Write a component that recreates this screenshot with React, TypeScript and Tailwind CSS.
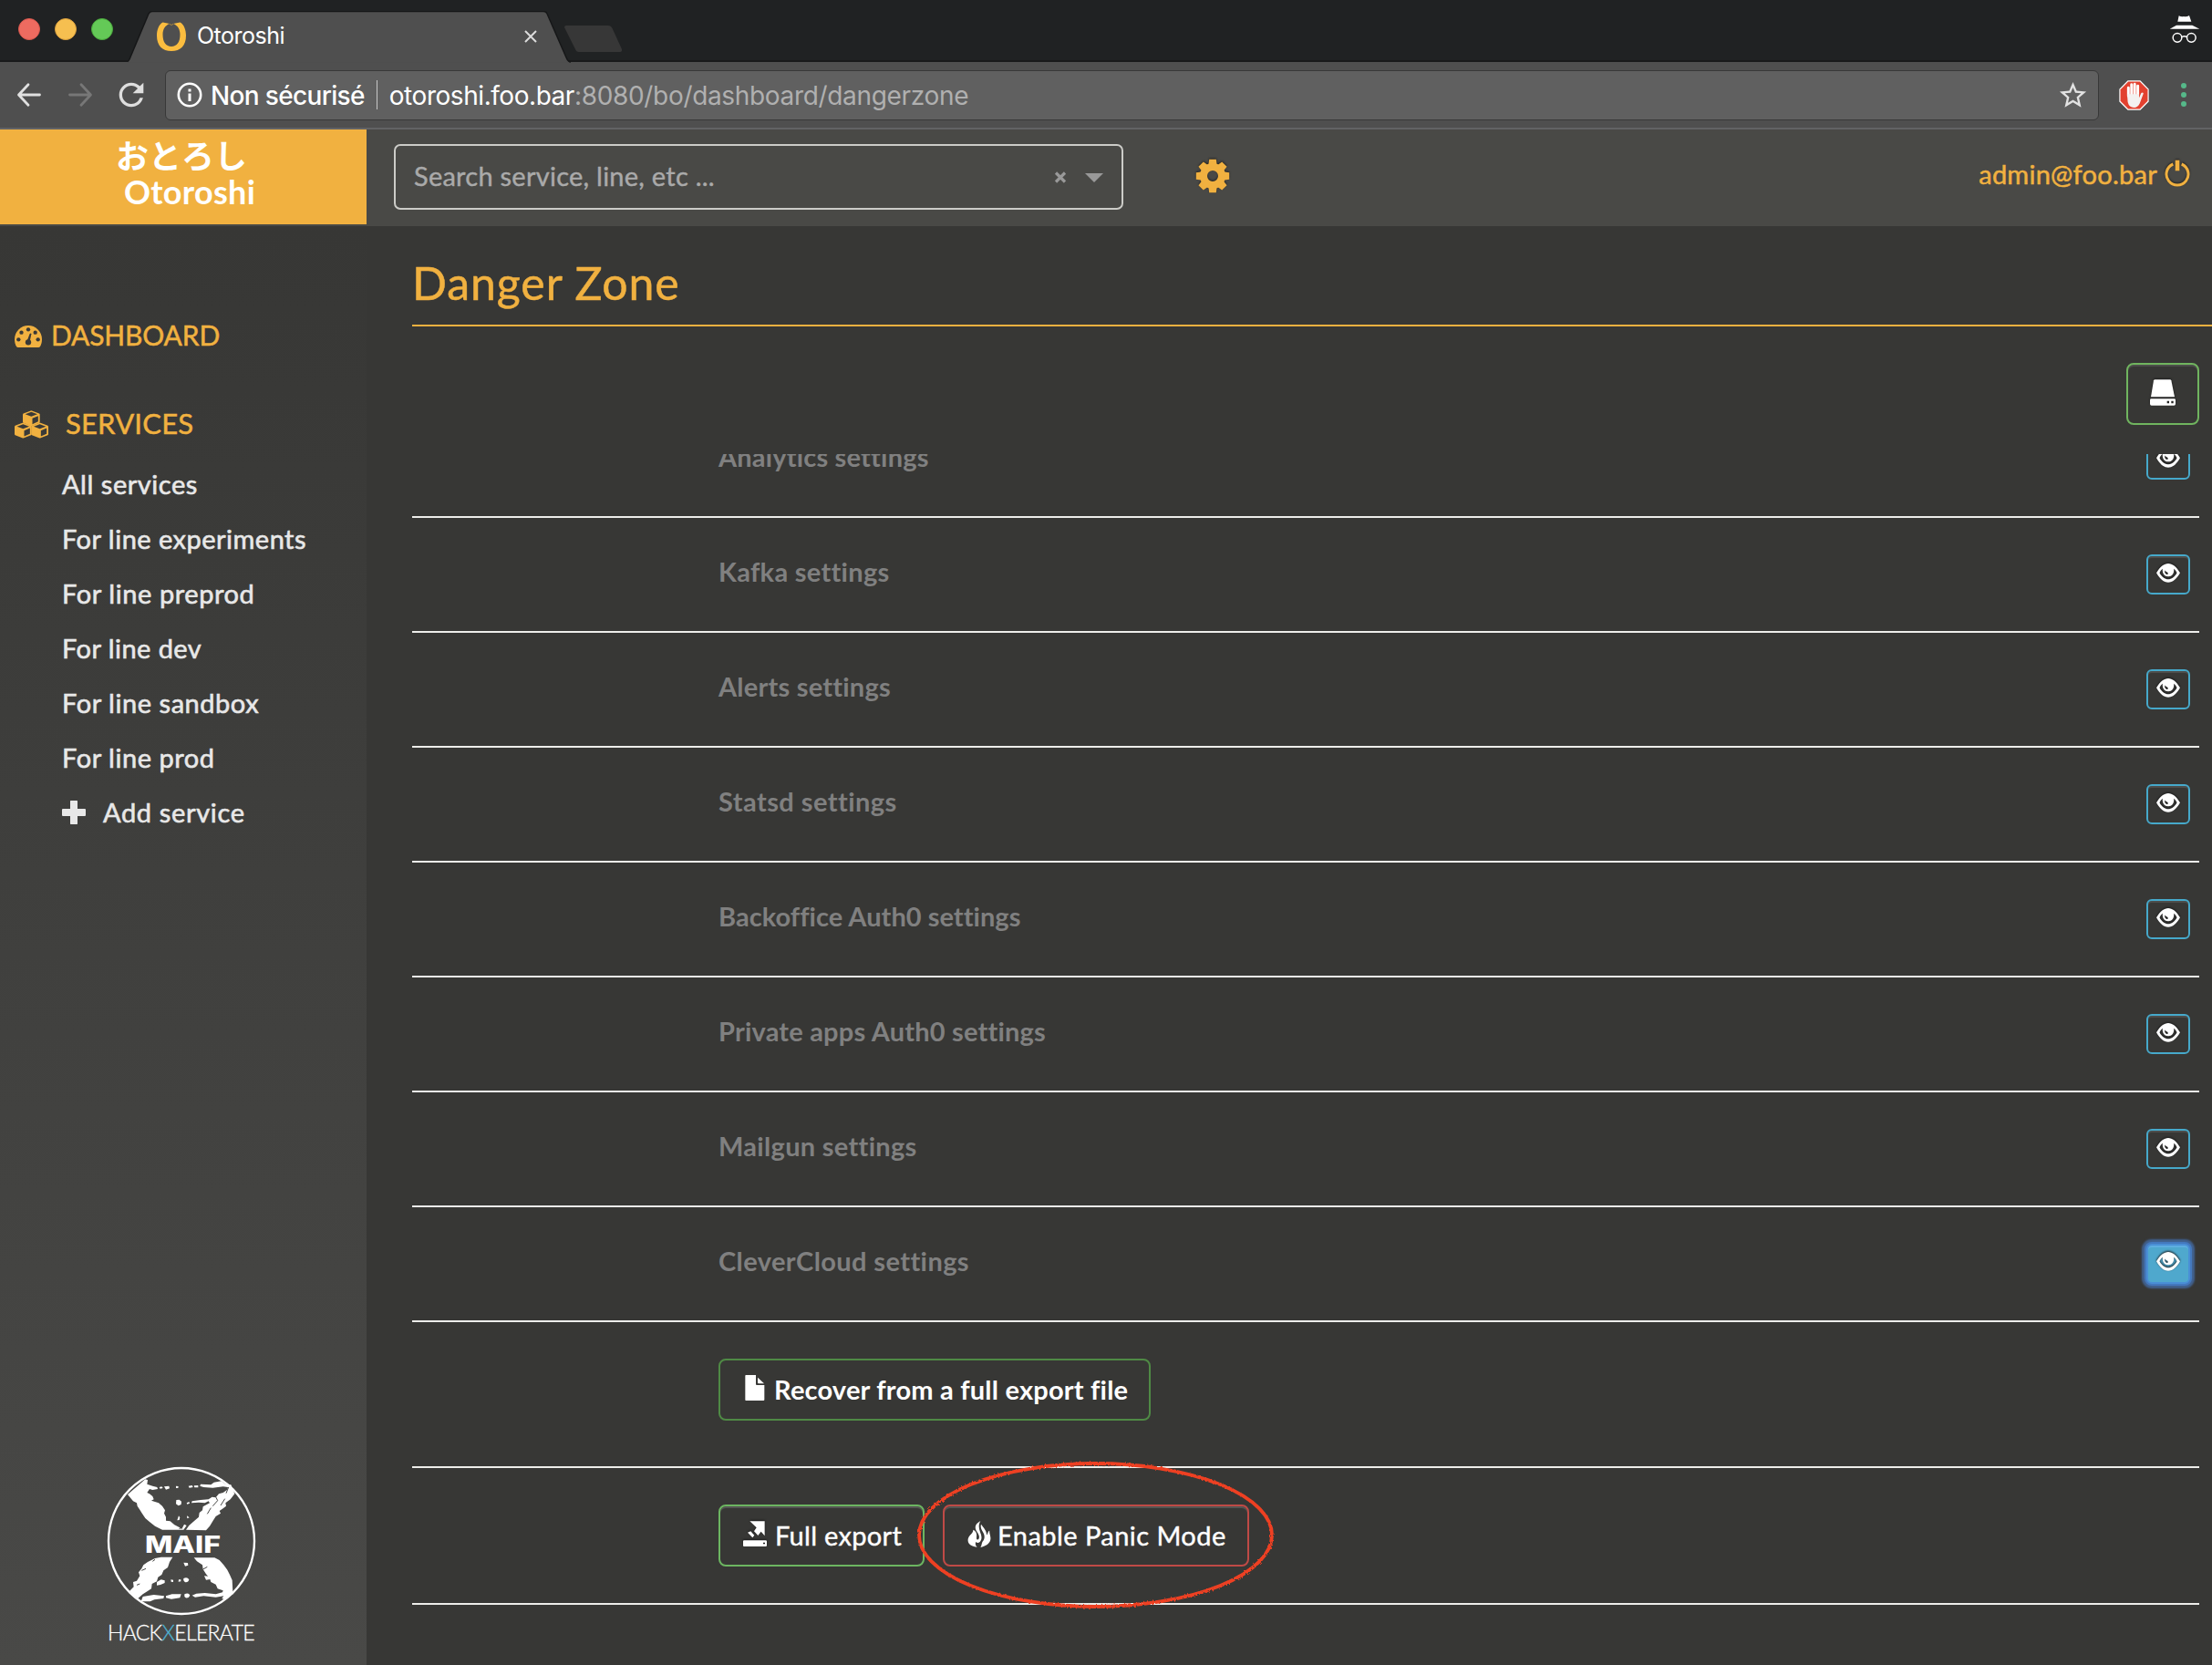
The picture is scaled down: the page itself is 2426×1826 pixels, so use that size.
import type { ReactNode } from "react";
import { MdRefresh, MdStarBorder } from "react-icons/md";

const YELLOW = "#f1b140";

/* ---------- icons ---------- */

const TabShape = () => (
  <svg className="absolute left-0 top-0" width="546" height="57" viewBox="0 0 546 57">
    <path d="M-2 56.5 C0 56 1 55 2 53 L23 3 Q24.500 0.500 27 0.500 H456 Q459 0.500 460 3 L481 51 Q483 56.500 486 56.500 Z" fill="#4f4f4f" />
    <path d="M-2 56 C0 56 1 55 2 53 L23 3 Q24.500 0.500 27 0.500 H456 Q459 0.500 460 3 L481 51 Q483 56 486 56" fill="none" stroke="#161718" strokeWidth="1.500" />
    <path d="M481 16 H527 Q530 16 531.500 19 L542 42 Q542.500 45 540 45 H495 Q492 45 491 42 L479 18 Q479 16 481 16Z" fill="#373737" />
  </svg>
);

const Favicon = () => (
  <svg width="32" height="32" viewBox="0 0 32 32">
    <path d="M6.500 0.500 L14 2 C9 4 6.500 8 6.500 14 C6.500 22 10 27 16 27 S25.500 22 25.500 14 C25.500 8 23 4 18 2 L25.500 0.500 C30 3 32 9 32 15 C32 26 26 32 16 32 S0 26 0 15 C0 9 2 3 6.500 0.500Z" fill="#fbbd3f" />
    <path d="M14 2.300 L16 3.500 L18 2.300" fill="none" stroke="#a9863f" strokeWidth="1" />
  </svg>
);

const Incognito = () => (
  <svg width="34" height="30" viewBox="0 0 98 90" fill="#fff">
    <path d="M26 20 L30 1 Q38 5 46 3 Q56 5 64 0 L71 20Z" />
    <path d="M0 44 L22 32 H74 L98 44Z" />
    <g fill="none" stroke="#fff" strokeWidth="4.500">
      <circle cx="25" cy="73" r="14.500" />
      <circle cx="71" cy="73" r="14.500" />
      <path d="M40 70 Q48 66 56 70" />
    </g>
  </svg>
);

const Back = ({ color, flip }: { color: string; flip?: boolean }) => (
  <svg width="28" height="28" viewBox="0 0 28 28" className={flip ? "-scale-x-100" : ""}>
    <path d="M25.500 14 H3 M13 2.800 L2.500 14 L13 25.200" fill="none" stroke={color} strokeWidth="2.800" strokeLinecap="round" strokeLinejoin="round" />
  </svg>
);

const Info = () => (
  <svg width="28" height="28" viewBox="0 0 28 28">
    <circle cx="14" cy="14" r="12.200" fill="none" stroke="#fff" strokeWidth="2.600" />
    <path d="M12.500 7.500h3v3h-3z M12.500 12.500h3v8.500h-3z" fill="#fff" />
  </svg>
);

const AdBlock = () => (
  <svg width="33" height="33" viewBox="0 0 96 96">
    <path d="M28 1 H68 L95 28 V68 L68 95 H28 L1 68 V28Z" fill="#fff" />
    <path d="M29.500 4.500 H66.500 L91.500 29.500 V66.500 L66.500 91.500 H29.500 L4.500 66.500 V29.500Z" fill="#e2412f" />
    <path d="M30 50 V24 M40 46 V14 M50 46 V12 M60 48 V18" stroke="#fff" strokeWidth="8.500" strokeLinecap="round" fill="none" />
    <path d="M26 44 H64 V56 L71 41 Q76 37 78 42 L66 74 Q60 87 48 87 Q32 87 28 70Z" fill="#f4f1f0" />
  </svg>
);

const Gear = () => (
  <svg width="38" height="38" viewBox="-19 -19 38 38" className="drop-shadow-[0_-1px_1px_#222]">
    <g fill={YELLOW}>
      <path d="M-3.800 -18.200 H3.800 L4.800 -11 H-4.800Z" />
      <path d="M-3.800 -18.200 H3.800 L4.800 -11 H-4.800Z" transform="rotate(45)" />
      <path d="M-3.800 -18.200 H3.800 L4.800 -11 H-4.800Z" transform="rotate(90)" />
      <path d="M-3.800 -18.200 H3.800 L4.800 -11 H-4.800Z" transform="rotate(135)" />
      <path d="M-3.800 -18.200 H3.800 L4.800 -11 H-4.800Z" transform="rotate(180)" />
      <path d="M-3.800 -18.200 H3.800 L4.800 -11 H-4.800Z" transform="rotate(225)" />
      <path d="M-3.800 -18.200 H3.800 L4.800 -11 H-4.800Z" transform="rotate(270)" />
      <path d="M-3.800 -18.200 H3.800 L4.800 -11 H-4.800Z" transform="rotate(315)" />
    </g>
    <circle r="10" fill="none" stroke={YELLOW} strokeWidth="8" />
  </svg>
);

const Power = () => (
  <svg width="28" height="30" viewBox="0 0 84 90" className="drop-shadow-[0_-1px_1px_#222]">
    <path d="M28 15 A36 36 0 1 0 56 15" fill="none" stroke={YELLOW} strokeWidth="9" />
    <path d="M35 2 H49 V37 H35Z" fill={YELLOW} />
  </svg>
);

const Dashboard = () => (
  <svg width="30" height="24" viewBox="0 0 90 72">
    <path d="M45 0 A45 45 0 0 1 90 45 C90 54 88 62 84 69 Q82 72 79 72 H11 Q8 72 6 69 C2 62 0 54 0 45 A45 45 0 0 1 45 0Z" fill={YELLOW} />
    <g fill="#393937">
      <circle cx="13" cy="46" r="6.500" />
      <circle cx="22.500" cy="23" r="6.500" />
      <circle cx="45" cy="13" r="6.500" />
      <circle cx="68" cy="23" r="6.500" />
      <circle cx="77" cy="46" r="6.500" />
      <circle cx="45" cy="55" r="9.500" />
      <path d="M41 50 L50 27 Q54 23 55 28 L50 53Z" />
    </g>
  </svg>
);

const Cube = ({ x, y }: { x: number; y: number }) => (
  <g transform={`translate(${x} ${y})`}>
    <path d="M28 0 L54 10 Q56 11 56 13 V38 Q56 40 54 41 L29 51 H27 L2 41 Q0 40 0 38 V13 Q0 11 2 10Z" fill={YELLOW} />
    <path d="M28 5 L48 12.500 L28 20 L8 12.500Z M31.500 26 L50.500 18 V36.500 L31.500 45Z" fill="#3a3a38" />
  </g>
);

const Cubes = () => (
  <svg width="37" height="31" viewBox="0 0 111 92">
    <Cube x={27} y={0} />
    <Cube x={0} y={40} />
    <Cube x={55} y={40} />
  </svg>
);

const Plus = () => (
  <svg width="26" height="26" viewBox="0 0 26 26">
    <path d="M9.500 0 H16.500 Q17 0 17 1 V9 H25 Q26 9 26 10 V16 Q26 17 25 17 H17 V25 Q17 26 16.500 26 H9.500 Q9 26 9 25 V17 H1 Q0 17 0 16 V10 Q0 9 1 9 H9 V1 Q9 0 9.500 0Z" fill="#e8e8e8" />
  </svg>
);

const Drive = () => (
  <svg width="28" height="29" viewBox="0 0 84 87" fill="#fff" className="drop-shadow-[0_-1px_1px_#1a1a1a]">
    <path d="M16 1 H66 Q69 1 70 4 L81 58 H3 L12 4 Q13 1 16 1Z" />
    <path fillRule="evenodd" d="M4 64 H80 Q84 64 84 68 V81 Q84 86 79 86 H5 Q0 86 0 81 V68 Q0 64 4 64Z M56 71 V79 H63 V71Z M70 71 V79 H77 V71Z" />
  </svg>
);

const Eye = () => (
  <svg width="26" height="21" viewBox="0 0 26 21" className="drop-shadow-[0_-1px_1px_#1a1a1a]">
    <path
      fill="#fff"
      fillRule="evenodd"
      d="M0 10.300 C4 3.500 8.500 0 13 0 S22 3.500 26 10.300 C22 17.200 18 20.700 13 20.700 S4 17.200 0 10.300Z M6.800 5.800 C5.300 7 4.200 8.600 3.500 10.300 C6 15 9.500 17.300 13 17.300 S20 15 22.500 10.300 C21.800 8.600 20.700 7 19.200 5.800 C19.800 11 17 14.300 13 14.300 S6.200 11 6.800 5.800Z M9.500 7.500 C8.600 9.800 10 12 12.200 12 C13.200 11 12.800 9.800 11.200 9.200 C10.300 8.800 9.900 8.200 9.500 7.500Z"
    />
  </svg>
);

const FileIcon = () => (
  <svg width="22" height="28" viewBox="0 0 66 84" fill="#fff">
    <path d="M3 0 H36 V30 Q36 33 39 33 H64 V81 Q64 84 61 84 H3 Q1 84 1 81 V3 Q1 0 3 0Z" />
    <path d="M42 8 L63 28 H45 Q42 28 42 25Z" />
  </svg>
);

const Export = () => (
  <svg width="26" height="29" viewBox="0 0 78 87" fill="#fff" className="drop-shadow-[0_-1px_1px_#1a1a1a]">
    <path d="M22 1 H71 V49 L59 35 L49 48 L36 34 L44 22Z" />
    <path d="M15 38 L25 34 L37 47 L31 55Z" />
    <path fillRule="evenodd" d="M3 64 H74 Q78 64 78 67 V81 Q78 84 74 84 H3 Q0 84 0 81 V67 Q0 64 3 64Z M66 71 V76 H72 V71Z" />
  </svg>
);

const Fire = () => (
  <svg width="26" height="29" viewBox="0 0 76 86" fill="#fff">
    <path d="M42 0 C26 9 22 19 28 31 C33 40 40 47 37 57 C35 62 30 62 29 57 C29 50 31 44 27 36 C25 33 22 31 18 29 C19 37 13 41 8 47 C0 56 -1 66 5 74 C11 81 20 84 31 85 C26 80 24 75 27 68 C32 74 40 71 43 64 C48 54 44 44 41 36 C36 24 35 12 42 0Z" />
    <path d="M44 11 C40 23 48 31 52 40 C57 51 55 60 49 67 C45 73 47 79 42 86 C58 82 70 76 74 63 C77 51 71 44 71 31 C65 35 66 43 62 46 C62 31 53 24 44 11Z" />
  </svg>
);

const Circled = () => (
  <svg className="pointer-events-none absolute -left-[36px] -top-[56px]" width="408" height="178" viewBox="0 0 408 178">
    <defs>
      <filter id="chalk" x="-5%" y="-5%" width="110%" height="110%">
        <feTurbulence type="fractalNoise" baseFrequency="0.5" numOctaves="2" seed="4" />
        <feDisplacementMap in="SourceGraphic" scale="3" />
      </filter>
    </defs>
    <ellipse cx="203.500" cy="89.500" rx="193.500" ry="78.500" fill="none" stroke="#ee4023" strokeWidth="3.800" filter="url(#chalk)" />
  </svg>
);

const MaifLogo = () => (
  <svg width="168" height="168" viewBox="75 53 504 504">
    <circle cx="327" cy="305" r="240" fill="none" stroke="#fff" strokeWidth="7" />
    <g fill="#fff">
      <path d="M150 152 L208 102 L216 104 L214 118 L232 124 L247 128 L249 134 L232 137 L222 134 L214 146 L222 150 L232 158 L236 168 L228 172 L240 176 L252 180 L264 190 L273 204 L270 214 L276 226 L276 238 L290 240 L304 252 L320 260 L328 266 L336 250 L344 254 L334 268 H264 L240 256 L222 242 L208 230 L196 212 L190 202 L182 190 L180 180 L168 174Z" />
      <path d="M342 268 L352 254 L370 238 L384 226 L386 212 L396 204 L398 192 L420 180 L416 174 L404 180 L384 178 L360 180 L362 174 L390 170 L416 168 L428 160 L440 162 L450 150 L464 146 L478 136 L480 128 L464 126 L430 130 L400 128 L388 124 L390 118 L424 120 L434 112 L458 108 L472 118 L490 120 L502 150 L488 168 L472 180 L474 190 L464 198 L452 206 L456 214 L440 224 L430 240 L420 256 L408 270Z" />
      <path d="M254 128 l8 -2 4 5 -9 2Z M270 126 l16 -2 2 8 -12 4Z M309 124 l8 1 -1 6 -7 0Z M350 124 l12 -2 3 6 -12 2Z M368 123 l14 -1 0 7 -12 0Z M344 180 l8 -4 2 5 -8 3Z M310 170 l10 -1 7 6 -1 10 -9 4 -8 -6Z M318 222 l4 6 -2 8 -7 1Z M345 222 l8 6 -7 3Z M258 230 l14 2 2 5 -14 -1Z" />
      <path d="M240 362 L260 358 H298 L288 374 L282 392 L268 402 L262 416 L250 424 L246 438 L230 446 L228 462 L212 472 L200 480 L184 494 L168 484 L156 470 L170 456 L168 440 L180 436 L190 420 L186 408 L196 396 L202 384 L216 374Z" />
      <path d="M368 360 H436 L452 368 L466 384 L478 400 L486 416 L494 434 L496 474 L470 498 L460 494 L466 486 L440 490 L400 486 L372 490 L362 484 L376 478 L404 476 L440 480 L462 474 L464 468 L446 462 L440 448 L424 440 L420 428 L408 414 L398 398 L396 384 L378 372Z" />
      <path d="M334 376 l14 1 1 8 -10 3Z M334 428 q12 -6 18 4 q-2 10 -12 9 q-8 -4 -6 -13Z M402 420 l22 2 2 8 -18 3Z M246 440 l14 -8 12 3 0 8 -14 6 -12 2Z M292 432 l8 1 0 7 -7 -1Z M318 432 l7 0 0 6 -8 1Z M337 480 q14 -6 18 4 q-4 10 -14 8 q-6 -4 -4 -12Z M276 486 l20 -6 30 0 -4 12 -28 4 -18 -4Z M200 488 l36 -6 34 4 -2 8 -30 4 -14 6 -30 0Z" />
    </g>
    <g stroke="#484846" strokeWidth="3" fill="none">
      <path d="M320 266 L334 250 M430 190 L446 172 L440 160 M456 188 L470 166 M412 216 L424 196 M474 148 L482 128 M196 402 L210 396 M232 372 L240 366 M398 398 L412 390 M180 450 L190 446" />
    </g>
    <text x="207" y="343" textLength="249" lengthAdjust="spacingAndGlyphs" fill="#fff" fontFamily="Inter, sans-serif" fontWeight="800" fontSize="77">MAIF</text>
  </svg>
);

/* ---------- browser chrome ---------- */

const Browser = () => (
  <div className="font-['Inter',sans-serif]">
    <div className="flex h-[68px] border-b-2 border-[#191a1b] bg-[#202223] pl-5">
      <div className="flex gap-4 pt-5">
        <span className="size-6 rounded-full border border-[#d8574d] bg-[#ee6b60]" />
        <span className="size-6 rounded-full border border-[#dba03d] bg-[#f6bf50]" />
        <span className="size-6 rounded-full border border-[#4aa93c] bg-[#64c957]" />
      </div>
      <div className="relative ml-4 mt-3 h-[56px] w-[485px] flex-none">
        <TabShape />
        <div className="relative flex h-[56px] items-center pl-8">
          <Favicon />
          <span className="ml-[12px] flex-1 text-[25px] tracking-[-0.5px] text-white">Otoroshi</span>
          <svg width="14" height="14" viewBox="0 0 14 14" className="mr-[36px]">
            <path d="M1 1 L13 13 M13 1 L1 13" stroke="#dcdcdc" strokeWidth="2" />
          </svg>
        </div>
      </div>
      <div className="flex flex-1 justify-end pr-[13px] pt-[17px]">
        <Incognito />
      </div>
    </div>
    <div className="flex h-[74px] items-center border-b-2 border-[#626365] bg-[#4f4f4f] pl-[18px]">
      <Back color="#e0e0e0" />
      <span className="ml-7 flex"><Back color="#777" flip /></span>
      <MdRefresh className="ml-[22px] size-10 text-[#dedede]" />
      <div className="ml-[17px] flex h-[55px] w-[2121px] items-center rounded-[6px] border border-[#383838] bg-[#606060] pl-3 text-[28px]">
        <Info />
        <span className="ml-[9px] mt-px font-medium tracking-[-0.66px] text-white">Non sécurisé</span>
        <span className="ml-[13px] h-8 w-px bg-[#c8c8c8]" />
        <span className="ml-[13px] mt-px tracking-[-0.45px] text-white">otoroshi.foo.bar</span>
        <span className="mt-px flex-1 tracking-[-0.33px] text-[#b0b0b0]">:8080/bo/dashboard/dangerzone</span>
        <MdStarBorder className="mr-[10px] size-[35px] text-[#e2e2e2]" />
      </div>
      <span className="ml-[22px] flex"><AdBlock /></span>
      <div className="ml-[35px] flex flex-col gap-1">
        <span className="size-[6px] rounded-full bg-[#56b98a]" />
        <span className="size-[6px] rounded-full bg-[#56b98a]" />
        <span className="size-[6px] rounded-full bg-[#56b98a]" />
      </div>
    </div>
  </div>
);

/* ---------- page ---------- */

const Header = () => (
  <header className="flex h-[106px] bg-[#494946]">
    <div className="flex h-[104px] w-[402px] flex-col items-center bg-[#f1b140] pt-[7px] font-bold text-white">
      <span className="mr-1 font-['Noto_Sans_CJK_JP',sans-serif] text-[36px] leading-[40px]">おとろし</span>
      <span className="ml-[14px] mt-px text-[36px] leading-[40px] tracking-[0.3px]">Otoroshi</span>
    </div>
    <div className="ml-[30px] mt-4 flex h-[72px] w-[800px] items-center rounded-[7px] border-2 border-[#ccccc8] pl-5 pr-5">
      <span className="flex-1 pb-[3px] text-[29px] tracking-[0.25px] text-[#aaa] [-webkit-text-stroke:0.4px_#aaa]">Search service, line, etc ...</span>
      <svg width="14" height="13" viewBox="0 0 14 13" className="mr-5">
        <path d="M2 1.500 L12 11.500 M12 1.500 L2 11.500" stroke="#999" strokeWidth="3.200" />
      </svg>
      <svg width="20" height="10" viewBox="0 0 20 10" className="mt-px">
        <path d="M0 0 H20 L10 10Z" fill="#999" />
      </svg>
    </div>
    <div className="ml-[79px] mt-[32px]"><Gear /></div>
    <div className="flex flex-1 justify-end pr-[24px] pt-[33px] text-[#f1b140]">
      <span className="mr-[8px] mt-[-1px] text-[29px] leading-[34px] tracking-[0.25px] [-webkit-text-stroke:0.5px_#f1b140]">admin@foo.bar</span>
      <Power />
    </div>
  </header>
);

const lines: [string, string][] = [
  ["All services", "tracking-[0.53px]"],
  ["For line experiments", "tracking-[0.48px]"],
  ["For line preprod", "tracking-[0.58px]"],
  ["For line dev", "tracking-[0.44px]"],
  ["For line sandbox", "tracking-[0.54px]"],
  ["For line prod", "tracking-[0.54px]"],
];

const Sidebar = () => (
  <aside className="flex w-[402px] flex-none flex-col bg-linear-to-b from-[#373735] to-[#494947] pt-[89px]">
    <div className="flex h-[60px] items-center pl-4 text-[30px] text-[#f1b140] [-webkit-text-stroke:0.5px_#f1b140]">
      <span className="mt-[3px] flex"><Dashboard /></span>
      <span className="ml-[10px] tracking-[-0.16px]">DASHBOARD</span>
    </div>
    <div className="mt-[38px] flex h-[60px] items-center pl-4 text-[31px] text-[#f1b140] [-webkit-text-stroke:0.5px_#f1b140]">
      <Cubes />
      <span className="ml-[19px] pb-px tracking-[0.2px]">SERVICES</span>
    </div>
    <nav className="mt-[6px] flex flex-col text-[29px] text-[#e8e8e8] [-webkit-text-stroke:0.6px_#e8e8e8]">
      {lines.map(([label, tracking]) => (
        <span key={label} className={`flex h-[60px] items-center pl-[68px] ${tracking}`}>{label}</span>
      ))}
      <span className="flex h-[60px] items-center pl-[68px] tracking-[0.65px]">
        <Plus />
        <span className="ml-[19px]">Add service</span>
      </span>
    </nav>
    <div className="mt-auto flex flex-col items-center pb-[20px] pr-[5px]">
      <MaifLogo />
      <span className="text-[23px] font-light leading-[32px] tracking-[-0.66px] text-white [-webkit-text-stroke:0.3px_#fff]">
        HACK<span className="text-[#4fb0cf] [-webkit-text-stroke:0.3px_#4fb0cf]">X</span>ELERATE
      </span>
    </div>
  </aside>
);

const settings: [string, string][] = [
  ["Analytics settings", "tracking-[0.2px]"],
  ["Kafka settings", "tracking-[0.3px]"],
  ["Alerts settings", "tracking-[0.22px]"],
  ["Statsd settings", "tracking-[0.45px]"],
  ["Backoffice Auth0 settings", "tracking-[0.03px]"],
  ["Private apps Auth0 settings", "tracking-[0.2px]"],
  ["Mailgun settings", "tracking-[0.3px]"],
  ["CleverCloud settings", "tracking-[0.4px]"],
];

const Row = ({ children, className }: { children: ReactNode; className: string }) => (
  <div className={`mr-[14px] flex items-start border-t-2 border-[#ededea] pl-[336px] pt-10 ${className}`}>{children}</div>
);

const Main = () => (
  <main className="flex min-w-0 flex-1 flex-col pl-[50px]">
    <h1 className="h-[110px] border-b-2 border-[#f1b140] pt-[33px] text-[50px] leading-[58px] tracking-[0.9px] text-[#f1b140] [-webkit-text-stroke:0.5px_#f1b140]">Danger Zone</h1>
    <div className="mr-[14px] mt-10 flex justify-end">
      <button className="flex h-[68px] w-[80px] items-center justify-center rounded-[8px] border-2 border-[#70b45f] pb-[3px] shadow-[inset_0_2px_0_#4d4d4b]">
        <Drive />
      </button>
    </div>
    <div className="mt-8 flex-1 overflow-hidden">
      <div className="mt-[-58px]">
        {settings.map(([label, tracking], i) => (
          <Row key={label} className="h-[126px] pr-[10px]">
            <span className={`mt-[-3px] flex-1 text-[29px] font-bold leading-[44px] text-[#808080] ${tracking}`}>{label}</span>
            {i === settings.length - 1 ? (
              <button className="flex h-[44px] w-[48px] items-center justify-center rounded-[6px] border-2 border-[#4a8fd6] bg-[#4fa8cd] pb-[5px] shadow-[0_0_0_2px_#4478bd,0_0_2px_5px_#41618f,inset_0_2px_0_#5eaee0]">
                <Eye />
              </button>
            ) : (
              <button className="flex h-[44px] w-[48px] items-center justify-center rounded-[6px] border-2 border-[#46a9cb] pb-[4px] shadow-[inset_0_2px_0_#4d4d4b]">
                <Eye />
              </button>
            )}
          </Row>
        ))}
        <Row className="h-[160px]">
          <button className="flex h-[68px] w-[474px] items-center rounded-[8px] border-2 border-[#4f8a45] pl-[27px] text-[29px] font-bold tracking-[0.2px] text-white">
            <span className="mb-1 mr-[10px] flex"><FileIcon /></span>
            Recover from a full export file
          </button>
        </Row>
        <Row className="h-[150px]">
          <button className="flex h-[68px] w-[226px] items-center rounded-[8px] border-2 border-[#6cb561] pl-[25px] text-[29px] tracking-[0.3px] text-white shadow-[inset_0_2px_0_#555553] [-webkit-text-stroke:0.4px_#fff]">
            <span className="mb-1 mr-[9px] flex"><Export /></span>
            <span className="pb-px">Full export</span>
          </button>
          <div className="relative ml-5">
            <button className="flex h-[68px] w-[336px] items-center rounded-[8px] border-2 border-[#bf4a46] pl-[25px] text-[29px] tracking-[0.45px] text-white shadow-[inset_0_2px_0_#555553] [-webkit-text-stroke:0.4px_#fff]">
              <span className="mb-1 mr-[7px] flex"><Fire /></span>
              <span className="pb-px">Enable Panic Mode</span>
            </button>
            <Circled />
          </div>
        </Row>
        <div className="mr-[14px] h-[2px] bg-[#ededea]" />
      </div>
    </div>
  </main>
);

export default function App() {
  return (
    <div className="flex h-[1826px] w-[2426px] flex-col overflow-hidden bg-[#373735] font-['Lato',sans-serif]">
      <Browser />
      <Header />
      <div className="flex min-h-0 flex-1">
        <Sidebar />
        <Main />
      </div>
    </div>
  );
}
